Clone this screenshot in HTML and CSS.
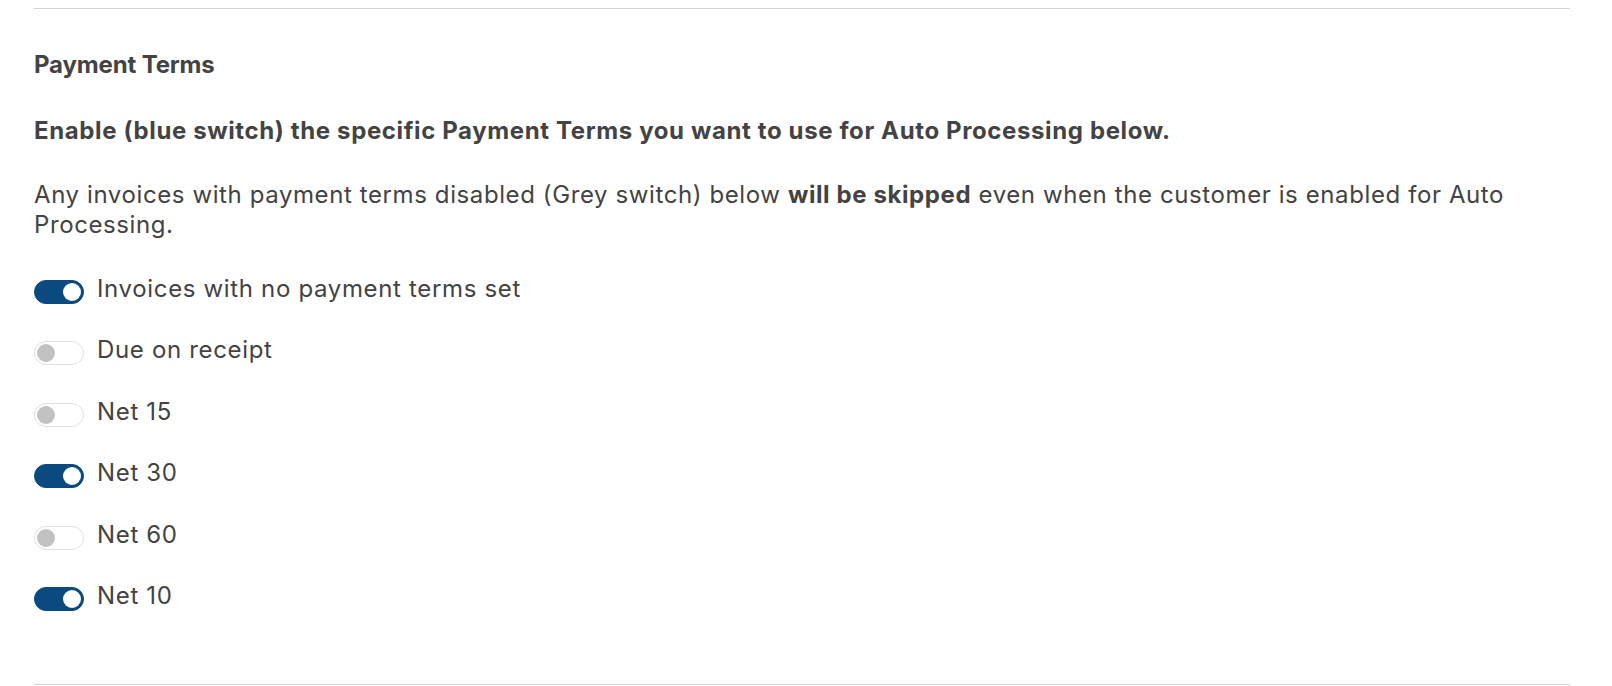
FILE: index.html
```html
<!DOCTYPE html>
<html lang="en">
<head>
<meta charset="utf-8">
<title>Payment Terms</title>
<link rel="stylesheet" href="styles.css">
</head>
<body>
<section class="section">
  <h2 class="title">Payment Terms</h2>
  <p class="lead">Enable (blue switch) the specific Payment Terms you want to use for Auto Processing below.</p>
  <p class="note">Any invoices with payment terms disabled (Grey switch) below <strong>will be skipped</strong> even when the customer is enabled for Auto Processing.</p>
  <ul class="terms">
    <li class="term"><span class="switch on"><span class="knob"></span></span><span class="label">Invoices with no payment terms set</span></li>
    <li class="term"><span class="switch"><span class="knob"></span></span><span class="label">Due on receipt</span></li>
    <li class="term"><span class="switch"><span class="knob"></span></span><span class="label">Net 15</span></li>
    <li class="term"><span class="switch on"><span class="knob"></span></span><span class="label">Net 30</span></li>
    <li class="term"><span class="switch"><span class="knob"></span></span><span class="label">Net 60</span></li>
    <li class="term"><span class="switch on"><span class="knob"></span></span><span class="label">Net 10</span></li>
  </ul>
</section>
</body>
</html>
```
FILE: styles.css
```css
html, body {
  margin: 0;
  padding: 0;
  background: #ffffff;
}

body {
  font-family: Inter, "Noto Sans", "Liberation Sans", sans-serif;
  font-size: 24px;
  line-height: 30px;
  letter-spacing: 0.6px;
  color: #434343;
}

.section {
  margin: 8px 42px 0 34px;
  border-top: 1px solid #d4d4d4;
  border-bottom: 1px solid #d4d4d4;
  padding: 41px 0 73px 0;
}

.title {
  font-size: 24px;
  line-height: 30px;
  font-weight: 700;
  letter-spacing: -0.15px;
  margin: 0 0 36px 0;
}

.lead {
  font-weight: 700;
  letter-spacing: 0.62px;
  margin: 0 0 34px 0;
}

.note {
  margin: 0 0 34px 0;
}

.note strong {
  font-weight: 700;
}

.terms {
  list-style: none;
  margin: 0;
  padding: 0;
  display: flex;
  flex-direction: column;
  gap: 31.4px;
}

.term {
  display: flex;
  align-items: center;
  gap: 13px;
  height: 30px;
}

.label {
  letter-spacing: 0.66px;
}

.switch {
  flex: none;
  box-sizing: border-box;
  width: 50px;
  height: 24px;
  margin-top: 6px;
  border-radius: 12px;
  border: 1px solid #e1e1e1;
  background: #ffffff;
  display: flex;
  align-items: center;
  padding: 0 2px;
}

.switch .knob {
  width: 18px;
  height: 18px;
  border-radius: 50%;
  background: #c2c2c2;
}

.switch.on {
  background: #0b4a7e;
  border-color: #0b4a7e;
  justify-content: flex-end;
}

.switch.on .knob {
  background: #ffffff;
}
```
